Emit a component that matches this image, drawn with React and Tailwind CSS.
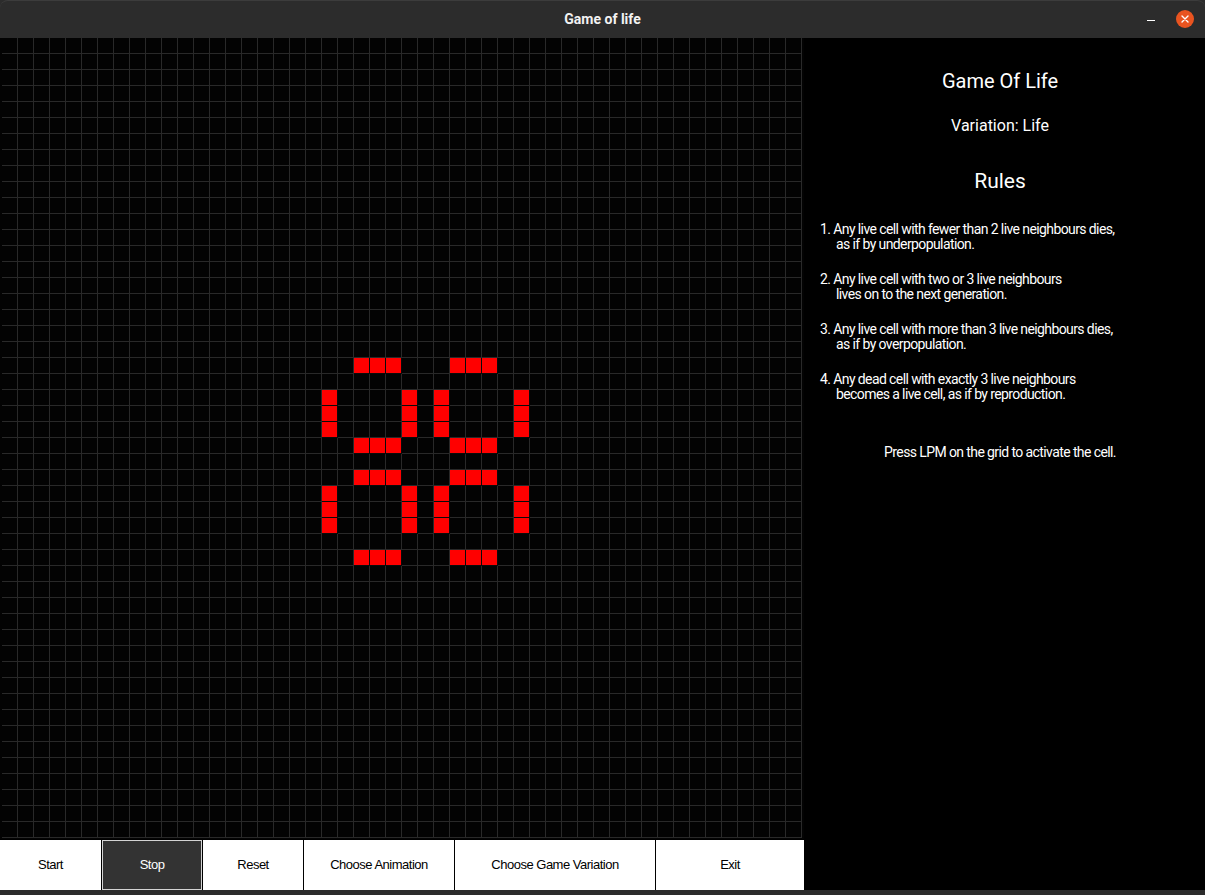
import React from 'react';

const COLS = 50;
const ROWS = 50;

// live cells as "row,col"
const alive = new Set();
const bars = [20, 25, 27, 32];
bars.forEach((r) => [22, 23, 24, 28, 29, 30].forEach((c) => alive.add(`${r},${c}`)));
[22, 23, 24, 28, 29, 30].forEach((r) => [20, 25, 27, 32].forEach((c) => alive.add(`${r},${c}`)));

const rules = [
  ['1. Any live cell with fewer than 2 live neighbours dies,', 'as if by underpopulation.'],
  ['2. Any live cell with two or 3 live neighbours', 'lives on to the next generation.'],
  ['3. Any live cell with more than 3 live neighbours dies,', 'as if by overpopulation.'],
  ['4. Any dead cell with exactly 3 live neighbours', 'becomes a live cell, as if by reproduction.'],
];

const buttons = [
  { label: 'Start', w: 'w-[102px]' },
  { label: 'Stop', w: 'w-[101px]', active: true },
  { label: 'Reset', w: 'w-[101px]' },
  { label: 'Choose Animation', w: 'w-[151px]' },
  { label: 'Choose Game Variation', w: 'w-[201px]' },
  { label: 'Exit', w: 'w-[148px]', last: true },
];

const Grid = () => {
  const cells = [];
  for (let r = 0; r < ROWS; r++) {
    for (let c = 0; c < COLS; c++) {
      const on = alive.has(`${r},${c}`);
      cells.push(
        <div
          key={`${r}-${c}`}
          className={
            on
              ? 'h-4 w-4 border-b border-r border-[#0a0a0a] bg-[#ff0000]'
              : 'h-4 w-4 border-b border-r border-[#292929]'
          }
        />
      );
    }
  }
  return (
    <div className="h-[801px] overflow-hidden bg-[#030303] pl-[2px]">
      <div className="grid grid-cols-[repeat(50,16px)]">{cells}</div>
    </div>
  );
};

const App = () => {
  return (
    <div className="flex h-[895px] w-[1205px] flex-col overflow-hidden bg-[#2c2c2c] font-['Roboto',sans-serif]">
      <header className="relative flex h-[38px] shrink-0 items-center justify-center rounded-t-[8px] border-t border-[#3c3c3c] bg-[#2c2c2c]">
        <span className="text-[14px] font-bold text-[#f2f2f2]">Game of life</span>
        <div className="absolute right-[11px] top-[9px] flex items-center gap-[21px]">
          <span className="mt-[3px] block h-[1.5px] w-[8px] bg-white" />
          <span className="flex h-[18px] w-[18px] items-center justify-center rounded-full bg-[#e95420]">
            <svg width="8" height="8" viewBox="0 0 8 8">
              <path d="M1 1 L7 7 M7 1 L1 7" stroke="white" strokeWidth="1.4" strokeLinecap="round" />
            </svg>
          </span>
        </div>
      </header>

      <div className="flex h-[852px] shrink-0 bg-black">
        <div className="flex w-[804px] flex-col">
          <Grid />
          <div className="mt-px flex h-[50px]">
            {buttons.map((b) => (
              <div
                key={b.label}
                className={`${b.w} flex items-center justify-center ${b.last ? '' : 'border-r border-black'} ${
                  b.active
                    ? 'bg-[#333333] text-white shadow-[inset_0_0_0_1px_#d4d4d4]'
                    : 'bg-white text-black'
                } font-['Liberation_Sans',sans-serif] text-[13px] tracking-[-0.5px]`}
              >
                {b.label}
              </div>
            ))}
          </div>
        </div>

        <aside className="flex flex-1 flex-col text-white">
          <div className="flex flex-col items-center pr-[9px] pt-[31px]">
            <h1 className="text-[20px] leading-[24px]">Game Of Life</h1>
            <h2 className="mt-[23px] text-[16px] leading-[20px]">Variation: Life</h2>
            <h3 className="mt-[32px] text-[21px] leading-[26px]">Rules</h3>
          </div>
          <div className="mt-[28px] flex flex-col gap-[20px] pl-[16px] text-[14px] leading-[15px] tracking-[-0.6px]">
            {rules.map(([a, b]) => (
              <div key={a}>
                <p>{a}</p>
                <p className="pl-[16px]">{b}</p>
              </div>
            ))}
          </div>
          <p className="mt-[43px] pr-[9px] text-center text-[14px] leading-[15px] tracking-[-0.6px]">
            Press LPM on the grid to activate the cell.
          </p>
        </aside>
      </div>

      <div className="h-[5px] shrink-0 bg-[#2c2c2c]" />
    </div>
  );
};

export default App;
